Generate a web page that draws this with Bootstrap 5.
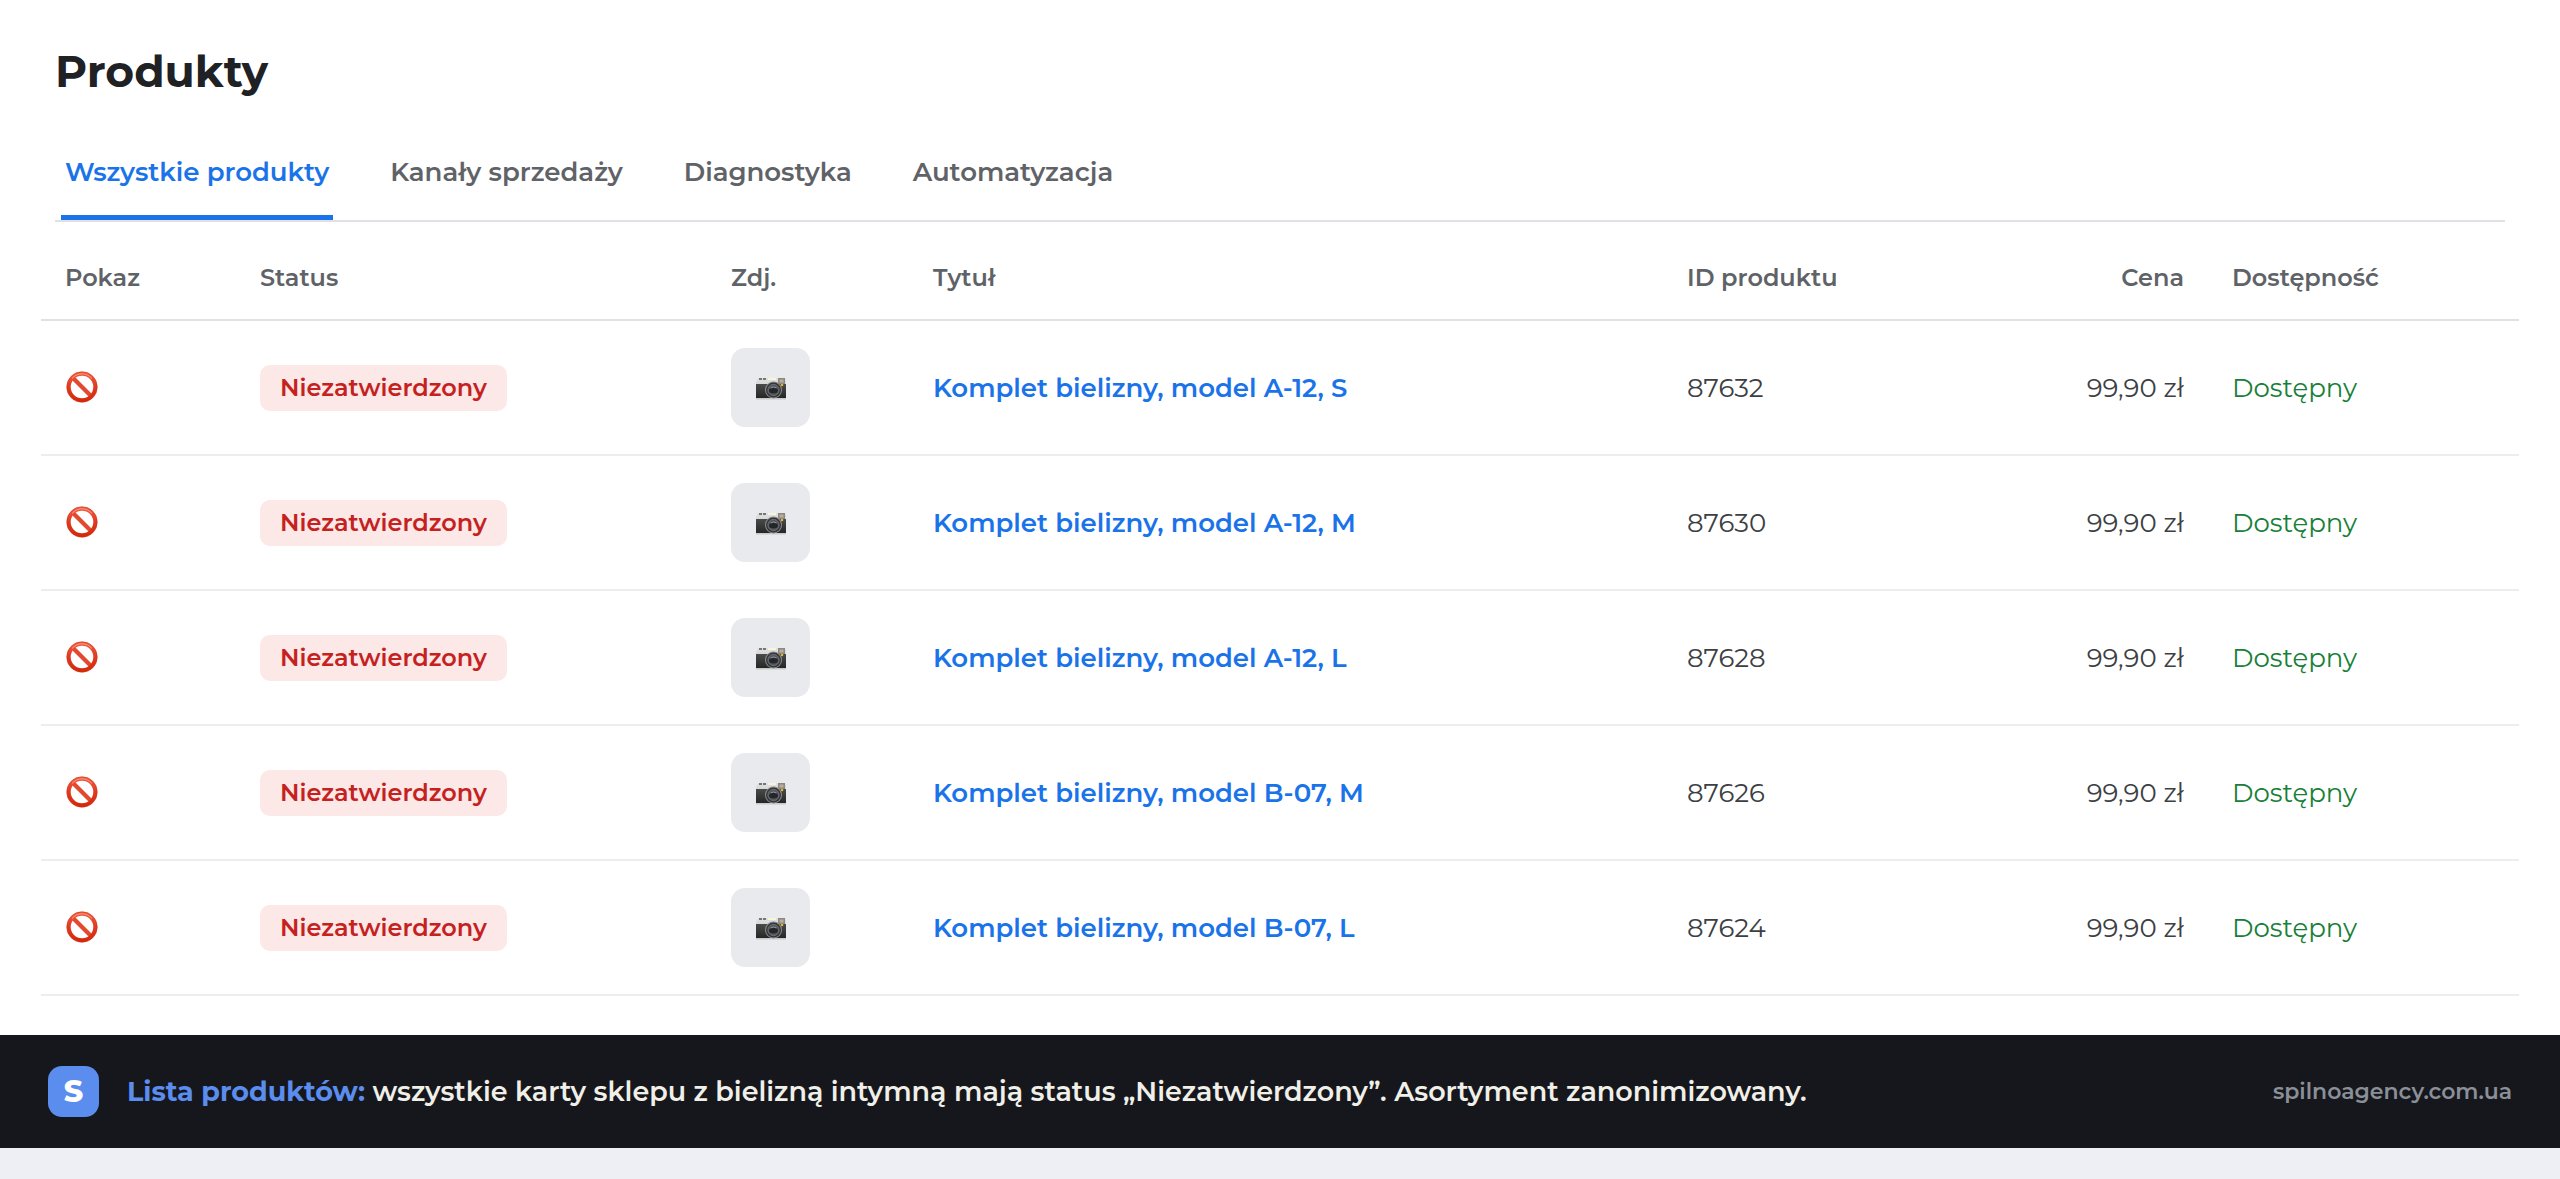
<!DOCTYPE html>
<html lang="pl">
<head>
<meta charset="utf-8">
<meta name="viewport" content="width=device-width, initial-scale=1">
<title>Produkty</title>
<link href="https://cdn.jsdelivr.net/npm/bootstrap@5.3.0/dist/css/bootstrap.min.css" rel="stylesheet">
<style>
  body { font-family: Montserrat, Inter, "Open Sans", sans-serif; font-size: 26px; line-height: 32px; background: #eeeff4; color: #3c4043; }
  .page-title { font-size: 44px; line-height: 56px; font-weight: 700; color: #202124; }
  .products-page { padding: 43px 41px 39px; }
  .page-head { padding: 0 14px; }
  .tab-bar { margin-top: 37px; padding: 0 6px; gap: 53px; border-bottom: 2px solid #e0e1e7; }
  .tab-bar .nav-link { padding: 20px 4px 27px; border-bottom: 5px solid transparent; font-weight: 600; color: #5f6368; }
  .tab-bar .nav-link.active { color: #1a73e8; border-color: #1a73e8; }
  .product-table { table-layout: fixed; --bs-table-bg: transparent; }
  .product-table th { padding: 40px 24px 25px; border-bottom: 2px solid #e0e1e7; font-size: 24px; font-weight: 600; color: #5f6368; }
  .product-table td { height: 135px; padding: 0 24px; border-bottom: 2px solid #ededf0; color: #3c4043; }
  .product-table a { color: #1a73e8; font-weight: 600; }
  .product-table td.in-stock { color: #188038; }
  .c-show { width: 195px; } .c-status { width: 471px; } .c-photo { width: 202px; } .c-title { width: 754px; }
  .c-id { width: 290px; } .c-price { width: 255px; } .c-stock { width: 311px; }
  .status-pill { display: inline-block; padding: 7px 20px; border-radius: 10px; background: #fce8e6; color: #c5221f; font-size: 24px; font-weight: 600; }
  .thumb { width: 79px; height: 79px; border-radius: 14px; background: #e8eaed; }
  .ban-icon { width: 34px; height: 34px; }
  .cam-icon { width: 32px; height: 24px; }
  .caption-bar { min-height: 113px; padding: 0 48px; gap: 28px; background: #15171c; color: #f0efe8; font-size: 27px; line-height: 34px; font-weight: 600; }
  .caption-bar b { color: #5b8def; font-weight: 700; }
  .brand-tile { width: 51px; height: 51px; border-radius: 14px; background: #5b8def; color: #fff; font-size: 30px; font-weight: 800; }
  .site-link { font-size: 22px; color: #8a8f98; }
</style>
<script src="https://cdn.jsdelivr.net/npm/bootstrap@5.3.0/dist/js/bootstrap.bundle.min.js"></script>
</head>
<body>
<svg class="position-absolute" width="0" height="0" aria-hidden="true">
  <defs>
    <linearGradient id="red" x1="0" y1="0" x2="0" y2="1"><stop offset="0" stop-color="#f0593f"/><stop offset=".5" stop-color="#e03a20"/><stop offset="1" stop-color="#d42a0c"/></linearGradient>
    <linearGradient id="silver" x1="0" y1="0" x2="0" y2="1"><stop offset="0" stop-color="#e2e2e0"/><stop offset="1" stop-color="#bcbcbc"/></linearGradient>
    <linearGradient id="leather" x1="0" y1="0" x2="0" y2="1"><stop offset="0" stop-color="#4a4a4a"/><stop offset="1" stop-color="#262626"/></linearGradient>
  </defs>
  <symbol id="ban" viewBox="0 0 34 34">
    <path d="M7.500 6.500 26.500 25.500" stroke="#e24a30" stroke-width="4.200"/>
    <circle cx="17" cy="16" r="13.300" fill="none" stroke="url(#red)" stroke-width="4"/>
    <circle cx="17" cy="16" r="15.300" fill="none" stroke="#c9290f" stroke-width=".5"/>
    <path d="M7 7.500a13 13 0 0 1 20 0" fill="none" stroke="#ff9c86" stroke-width="1"/>
  </symbol>
  <symbol id="cam" viewBox="0 0 32 24">
    <path d="M2 4 3 2h27l1 1v20H1V6z" fill="url(#silver)"/>
    <path d="M1 8h30v14H1z" fill="url(#leather)"/>
    <path d="M1 22h30v1.500H1z" fill="#c9c9c9"/>
    <path d="M4 2h3v2H4zM8 2h3v2H8z" fill="#77777a"/>
    <path d="M13 2h8v2h-8z" fill="#f7f3dc"/>
    <path d="M23 2h7v6h-7z" fill="#8d8780"/><path d="M24.500 3.500h4v3h-4z" fill="#b9aca0"/>
    <circle cx="18.500" cy="14" r="8.500" fill="#8c8d8e"/><circle cx="18.500" cy="14" r="7.500" fill="#303235"/>
    <circle cx="18.500" cy="14" r="5.700" fill="#55585d" stroke="#85878b" stroke-width=".6"/><ellipse cx="18.500" cy="14.500" rx="4.500" ry="3" fill="#24262a"/>
    <path d="M15.500 12q3-2 6 0" fill="none" stroke="#9aa0a8" stroke-width=".9"/>
    <circle cx="27" cy="9" r="1.300" fill="#e3b62c"/>
  </symbol>
</svg>

<main class="products-page bg-white">
  <header class="page-head">
    <h1 class="page-title mb-0">Produkty</h1>
    <nav class="nav tab-bar" aria-label="Sekcje produktów">
      <a class="nav-link active" aria-current="page" href="#all">Wszystkie produkty</a>
      <a class="nav-link" href="#channels">Kanały sprzedaży</a>
      <a class="nav-link" href="#diagnostics">Diagnostyka</a>
      <a class="nav-link" href="#automation">Automatyzacja</a>
    </nav>
  </header>
  <table class="table product-table align-middle mb-0">
    <colgroup><col class="c-show"><col class="c-status"><col class="c-photo"><col class="c-title"><col class="c-id"><col class="c-price"><col class="c-stock"></colgroup>
    <thead>
      <tr><th scope="col">Pokaz</th><th scope="col">Status</th><th scope="col">Zdj.</th><th scope="col">Tytuł</th><th scope="col">ID produktu</th><th scope="col" class="text-end">Cena</th><th scope="col">Dostępność</th></tr>
    </thead>
    <tbody>
      <tr><td><svg class="ban-icon d-block"><use href="#ban"/></svg></td><td><span class="status-pill">Niezatwierdzony</span></td><td><div class="thumb d-flex align-items-center justify-content-center"><svg class="cam-icon"><use href="#cam"/></svg></div></td><td><a class="text-decoration-none" href="#p87632">Komplet bielizny, model A-12, S</a></td><td>87632</td><td class="text-end">99,90 zł</td><td class="in-stock">Dostępny</td></tr>
      <tr><td><svg class="ban-icon d-block"><use href="#ban"/></svg></td><td><span class="status-pill">Niezatwierdzony</span></td><td><div class="thumb d-flex align-items-center justify-content-center"><svg class="cam-icon"><use href="#cam"/></svg></div></td><td><a class="text-decoration-none" href="#p87630">Komplet bielizny, model A-12, M</a></td><td>87630</td><td class="text-end">99,90 zł</td><td class="in-stock">Dostępny</td></tr>
      <tr><td><svg class="ban-icon d-block"><use href="#ban"/></svg></td><td><span class="status-pill">Niezatwierdzony</span></td><td><div class="thumb d-flex align-items-center justify-content-center"><svg class="cam-icon"><use href="#cam"/></svg></div></td><td><a class="text-decoration-none" href="#p87628">Komplet bielizny, model A-12, L</a></td><td>87628</td><td class="text-end">99,90 zł</td><td class="in-stock">Dostępny</td></tr>
      <tr><td><svg class="ban-icon d-block"><use href="#ban"/></svg></td><td><span class="status-pill">Niezatwierdzony</span></td><td><div class="thumb d-flex align-items-center justify-content-center"><svg class="cam-icon"><use href="#cam"/></svg></div></td><td><a class="text-decoration-none" href="#p87626">Komplet bielizny, model B-07, M</a></td><td>87626</td><td class="text-end">99,90 zł</td><td class="in-stock">Dostępny</td></tr>
      <tr><td><svg class="ban-icon d-block"><use href="#ban"/></svg></td><td><span class="status-pill">Niezatwierdzony</span></td><td><div class="thumb d-flex align-items-center justify-content-center"><svg class="cam-icon"><use href="#cam"/></svg></div></td><td><a class="text-decoration-none" href="#p87624">Komplet bielizny, model B-07, L</a></td><td>87624</td><td class="text-end">99,90 zł</td><td class="in-stock">Dostępny</td></tr>
    </tbody>
  </table>
</main>
<footer class="caption-bar d-flex align-items-center">
  <span class="brand-tile d-flex align-items-center justify-content-center flex-shrink-0">S</span>
  <p class="mb-0"><b>Lista produktów:</b> wszystkie karty sklepu z bielizną intymną mają status „Niezatwierdzony”. Asortyment zanonimizowany.</p>
  <a class="site-link ms-auto text-decoration-none" href="#site">spilnoagency.com.ua</a>
</footer>
</body>
</html>
